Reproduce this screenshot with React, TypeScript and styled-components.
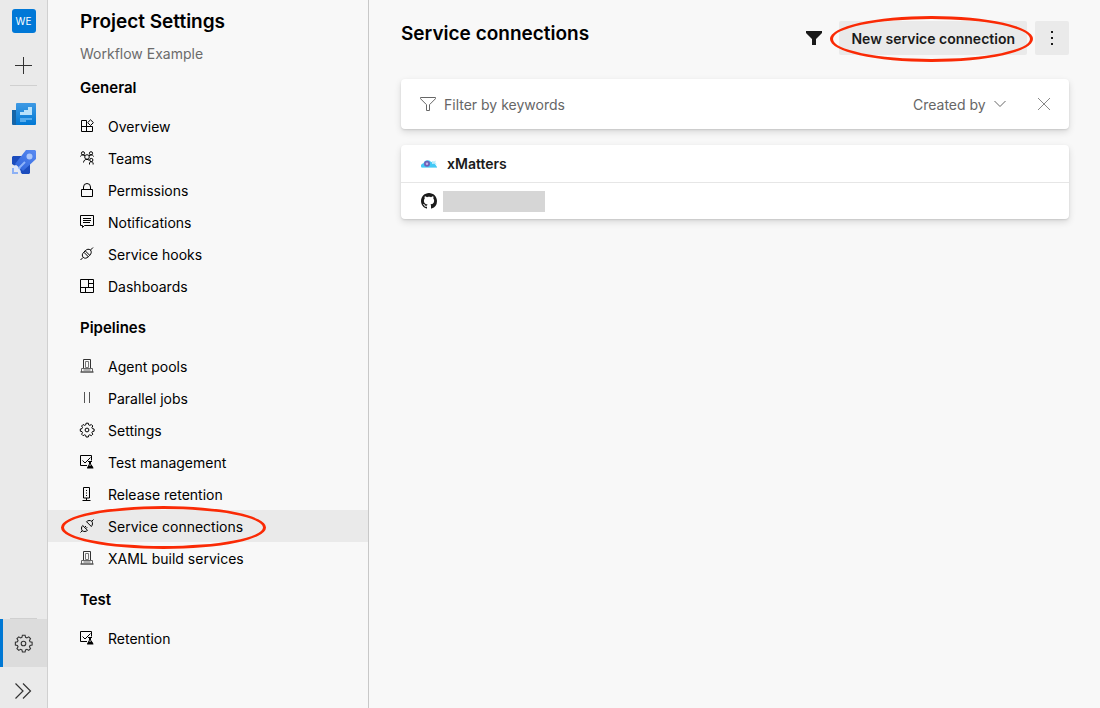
import React from "react";
import styled, { createGlobalStyle } from "styled-components";

const GlobalStyle = createGlobalStyle`
  *, *::before, *::after { box-sizing: border-box; }
  body {
    margin: 0;
    background: #f8f8f8;
    color: #000;
    font-family: Inter, "Liberation Sans", sans-serif;
    font-size: 14px;
    line-height: 20px;
  }
  button, input, select { font: inherit; color: inherit; border: 0; padding: 0; background: none; }
  button, select { cursor: pointer; }
  ul { list-style: none; margin: 0; padding: 0; }
  a { color: inherit; text-decoration: none; }
  svg { display: block; flex: none; }
`;

const Page = styled.div`
  display: flex;
  min-height: 100vh;
`;

const Rail = styled.nav`
  display: flex;
  flex-direction: column;
  flex: none;
  width: 48px;
  height: 100vh;
  background: #eaeaea;
  border-right: 1px solid #d0d0d0;
`;

const RailButton = styled.button<{ $active?: boolean }>`
  display: flex;
  align-items: center;
  justify-content: center;
  flex: none;
  width: 100%;
  height: 48px;
  color: #333;
  background: ${(p) => (p.$active ? "#dcdcdc" : "transparent")};
  box-shadow: ${(p) => (p.$active ? "inset 3px 0 #0078d4" : "none")};
`;

const ProjectButton = styled(RailButton)`
  height: 42px;
`;

const AddButton = styled(RailButton)`
  height: 43px;
  padding-top: 3px;
`;

const ExpandButton = styled(RailButton)`
  height: 41px;
  padding-top: 7px;
`;

const ProjectBadge = styled.span`
  width: 24px;
  height: 24px;
  border-radius: 3px;
  background: #0078d7;
  color: #fff;
  font-size: 10px;
  line-height: 24px;
  text-align: center;
`;

const Divider = styled.div`
  flex: none;
  height: 1px;
  margin: 0 10px;
  background: #d0d0d0;
`;

const RailServices = styled.div`
  flex: 1;
  padding-top: 4px;
`;

const Sidebar = styled.aside`
  flex: none;
  width: 321px;
  padding-top: 8px;
  border-right: 1px solid #c8c8c8;
`;

const SidebarTitle = styled.h1`
  margin: 0 32px;
  font-size: 19px;
  line-height: 28px;
  font-weight: 600;
`;

const SidebarSubtitle = styled.div`
  margin: 8px 32px 0;
  color: #6b6b6b;
`;

const SectionTitle = styled.h2`
  margin: 0;
  padding: 16px 32px 12px;
  font-size: 15px;
  line-height: 20px;
  font-weight: 600;
`;

const FirstSectionTitle = styled(SectionTitle)`
  padding-top: 14px;
`;

const NavLink = styled.a<{ $active?: boolean }>`
  position: relative;
  display: flex;
  align-items: center;
  gap: 14px;
  height: 32px;
  padding: 0 32px;
  background: ${(p) => (p.$active ? "#eaeaea" : "transparent")};
`;

const NavLabel = styled.span`
  padding-top: 2px;
`;

const Ring = styled.span`
  position: absolute;
  border: 3px solid #fa2a05;
  border-radius: 50%;
  pointer-events: none;
`;

const NavRing = styled(Ring)`
  left: 13px;
  top: -4px;
  width: 205px;
  height: 43px;
`;

const ButtonRing = styled(Ring)`
  left: -9px;
  right: -6px;
  top: -5px;
  bottom: -7px;
`;

const Main = styled.main`
  flex: 1;
  min-width: 0;
  padding: 21px 31px 32px 32px;
`;

const Header = styled.header`
  display: flex;
  align-items: flex-start;
  justify-content: space-between;
  margin-bottom: 24px;
`;

const PageTitle = styled.h2`
  margin: 0;
  font-size: 19px;
  line-height: 26px;
  font-weight: 600;
`;

const Actions = styled.div`
  display: flex;
  gap: 8px;
`;

const ActionButton = styled.button<{ $plain?: boolean }>`
  position: relative;
  display: flex;
  align-items: center;
  justify-content: center;
  min-width: 34px;
  height: 34px;
  border-radius: 2px;
  color: #1a1a1a;
  background: ${(p) => (p.$plain ? "transparent" : "#eaeaea")};
`;

const NewButton = styled(ActionButton)`
  padding: 2px 12px 0;
  font-weight: 600;
`;

const Card = styled.section`
  margin-bottom: 16px;
  border-radius: 4px;
  background: #fff;
  box-shadow: 0 3px 7px rgba(0, 0, 0, 0.13), 0 1px 2px rgba(0, 0, 0, 0.11);
`;

const FilterBar = styled(Card)`
  display: flex;
  align-items: center;
  height: 50px;
  padding: 0 18px 0 19px;
  color: #666;
`;

const Keyword = styled.label`
  display: flex;
  align-items: center;
  flex: 1;
  gap: 8px;
`;

const KeywordInput = styled.input`
  flex: 1;
  min-width: 0;
  height: 32px;
  outline: 0;
  &::placeholder { color: #666; opacity: 1; }
`;

const CreatedBy = styled.label`
  display: flex;
  align-items: center;
  gap: 8px;
  margin-right: 31px;
`;

const CreatedBySelect = styled.select`
  appearance: none;
  height: 32px;
  padding-top: 2px;
`;

const Connection = styled.li`
  & + & { border-top: 1px solid #e6e6e6; }
`;

const ConnectionLink = styled.a<{ $gap: number; $height: number }>`
  display: flex;
  align-items: center;
  gap: ${(p) => p.$gap}px;
  height: ${(p) => p.$height}px;
  padding: 0 20px;
  color: #1a1a1a;
  font-weight: 600;
`;

const Redacted = styled.span`
  width: 102px;
  height: 21px;
  background: #d6d6d6;
`;

type IconName =
  | "overview" | "teams" | "lock" | "comment" | "plug" | "dashboard" | "server"
  | "parallel" | "gear" | "test" | "release" | "connect";

const shapes: Record<IconName, React.ReactNode> = {
  overview: (
    <>
      <path d="M6.5 1.5H1.5v11h11v-5M1.5 7.5h11M6.5 1.5v11" />
      <path d="M10.5.8l2.9 2.8-2.9 2.9-2.8-2.9z" />
    </>
  ),
  teams: (
    <>
      <circle cx="3" cy="2.3" r="1.6" />
      <circle cx="11" cy="2.3" r="1.6" />
      <circle cx="7" cy="6" r="2.3" />
      <circle cx="11.3" cy="9" r="1.6" />
      <path d="M.5 5.5C.8 4.3 1.7 3.9 3 3.9l2 .7M13.5 5.5c-.3-1.2-1.2-1.6-2.5-1.6l-2 .7M3.5 11.5C3.8 9.3 5 8.4 7 8.3l2 .8M9.5 13.5v-1.8c.8-1.2 2.8-1.2 3.6 0v1.8" />
    </>
  ),
  lock: <path d="M1.5 6.5h11v7h-11zM3.5 6.5V4a3.5 3.5 0 0 1 7 0v2.5" />,
  comment: <path d="M.5.5h13v10H4.500L2.500 12.500v-2h-2zM3 3.500h8M3 5.500h8M3 7.500h7" />,
  plug: (
    <>
      <path d="M.5 13 3 10.500M10.500 3 13 .5M3.800 5.200l4.500 4.500M5.200 3.800l4.500 4.500" />
      <path d="M3.800 5.200C2 7 1.800 8.800 3.200 10.300c1.500 1.400 3.300 1.200 5.100-.6l1.400-1.400c1.800-1.800 2-3.600.8-5.300-1.700-1.200-3.500-1-5.300.8z" />
    </>
  ),
  dashboard: <path d="M.5.5h13v13H.5zM8.500.5v8M.5 8.500h13M8.500 4.500h5M5.500 8.500v5" />,
  server: (
    <>
      <path d="M3.500 9V.5h7V9" stroke="#333" />
      <path d="M5.500 2.500h3v6h-3z" stroke="#777" />
      <path d="M1.500 12.500v-3h11v3M3.500 11h7" stroke="#666" />
      <path d="M.5 13h13" />
    </>
  ),
  parallel: <path d="M4.500 1v11M9.500 1v11" stroke="#555" />,
  gear: (
    <>
      <path d="M5.900.6h2.200l.4 1.700 1.100.5 1.500-.9 1.500 1.500-.9 1.500.5 1.100 1.700.4v2.200l-1.700.4-.5 1.100.9 1.500-1.500 1.500-1.500-.9-1.100.5-.4 1.700H5.900l-.4-1.700-1.100-.5-1.500.9-1.500-1.500.9-1.500-.5-1.100L.1 8.600V6.400L1.800 6l.5-1.100-.9-1.500 1.500-1.500 1.500.9 1.100-.5z" transform="translate(.2 -.4)" />
      <circle cx="7" cy="7" r="1.900" />
    </>
  ),
  test: (
    <>
      <path d="M7 10.500H.5v-10h11v5M2.500 5.500 5 8l5.500-5.500" />
      <path d="M8 6.500h4M9.500 7v2L7.500 13M10.500 7v2l2.500 4" />
      <path d="M8.500 10.500h3.500l1.500 3H7z" fill="currentColor" stroke="none" />
    </>
  ),
  release: (
    <>
      <path d="M3.500.5h6v10.500h-6zM6.500 11v2.500M2.500 13.500h8" />
      <path d="M6.500 3v1M6.500 5.500v1M6.500 8v1" />
    </>
  ),
  connect: (
    <>
      <path d="M.5 13.500 2.200 11.800M11.800 2.200l1.700-1.700M2.700 6.500l4.800 4.800M6.500 2.700l4.800 4.800M4.600 8.400 6 7M5.800 9.600l1.400-1.400" />
      <path d="M2.700 6.500C1.300 8 1.100 10 2.200 11.800c1.800 1.100 3.800.9 5.300-.5M6.500 2.700C8 1.300 10 1.100 11.800 2.200c1.100 1.800.9 3.800-.5 5.300" />
    </>
  ),
};

const Icon = ({ name, size = 14 }: { name: IconName; size?: number }) => (
  <svg width={size} height={size} viewBox="0 0 14 14" fill="none" stroke="currentColor" strokeWidth={size > 14 ? 0.9 : 1} overflow="visible" aria-hidden="true">
    {shapes[name]}
  </svg>
);

const BoardsLogo = () => (
  <svg width="24" height="22" viewBox="0 0 24 22" aria-hidden="true">
    <defs>
      <linearGradient id="boards" x1="0" y1="0" x2="0" y2="1">
        <stop offset="0" stopColor="#3f9ae4" />
        <stop offset="1" stopColor="#0078d4" />
      </linearGradient>
    </defs>
    <path d="M0 7h5v15H1a1 1 0 0 1-1-1z" fill="#1565a8" />
    <path d="M4 1a1 1 0 0 1 1-1h18a1 1 0 0 1 1 1v20a1 1 0 0 1-1 1H4z" fill="url(#boards)" />
    <path d="M8 12V9h4V7h4V4h4v8z" fill="#b9e2fb" />
    <path d="M8 15h12v2H14v2H8z" fill="#55aced" />
  </svg>
);

const RocketLogo = () => (
  <svg width="24" height="24" viewBox="0 0 24 24" aria-hidden="true">
    <defs>
      <linearGradient id="rocket" x1="1" y1="0" x2="0" y2="1">
        <stop offset="0" stopColor="#5a8bf2" />
        <stop offset="1" stopColor="#2b62da" />
      </linearGradient>
    </defs>
    <path d="M1 6h9l-7 10-3-2V7zM18 13v10l-1 1h-7l-3-4z" fill="#1b4cbd" />
    <path d="M14 0h9l1 1v8L11 21l-8-7z" fill="url(#rocket)" />
    <circle cx="17.500" cy="6.500" r="3" fill="#aac6fb" />
    <path d="M13 12l-7 7" stroke="#8db3fa" strokeWidth="2" />
    <path d="M3 15l6 6-1 2-3-3-2 1-1-3-1-1z" fill="#dce7fd" />
    <path d="M0 18h2v4h4v2H0z" fill="#8db1f5" />
  </svg>
);

const XMattersLogo = () => (
  <svg width="16" height="16" viewBox="0 0 16 16" aria-hidden="true">
    <path d="M1.500 12A2.200 2.200 0 0 1 1 8c.5-.6 1-.7 1.500-.7C3.300 5 5 4 7 4.300c1.500.1 2.500.8 3.200 1.900 1.300-.8 3-.3 3.500 1.300L16 11v1z" fill="#43c9f6" />
    <path d="M11 5l2 .5 2-1-.8 2 1.800 2-3-.8-2 .3z" fill="#b8eafb" />
    <circle cx="6" cy="7.800" r="3" fill="#6d62b8" />
    <circle cx="6" cy="7.800" r="1.200" fill="#c4b2e2" />
    <path d="M1 11h15v1H1z" fill="#8cdef8" />
  </svg>
);

const GitHubLogo = () => (
  <svg width="16" height="16" viewBox="0 0 16 16" fill="#1b1b1b" aria-hidden="true">
    <path d="M8 0C3.580 0 0 3.580 0 8c0 3.540 2.290 6.530 5.470 7.590.4.070.55-.17.55-.38 0-.19-.01-.82-.01-1.490-2.010.37-2.530-.49-2.690-.94-.09-.23-.48-.94-.82-1.130-.28-.15-.68-.52-.01-.53.63-.01 1.080.58 1.230.82.72 1.210 1.870.87 2.330.66.07-.52.28-.87.51-1.070-1.780-.2-3.640-.89-3.640-3.950 0-.87.31-1.590.82-2.150-.08-.2-.36-1.020.08-2.120 0 0 .67-.21 2.200.82.64-.18 1.320-.27 2-.27s1.360.09 2 .27c1.530-1.040 2.200-.82 2.200-.82.44 1.100.16 1.920.08 2.120.51.56.82 1.270.82 2.150 0 3.070-1.870 3.750-3.650 3.950.29.25.54.73.54 1.480 0 1.070-.01 1.930-.01 2.200 0 .21.15.46.55.38A8.010 8.010 0 0 0 16 8c0-4.420-3.580-8-8-8z" />
  </svg>
);

type Item = { label: string; icon: IconName; active?: boolean };

const general: Item[] = [
  { label: "Overview", icon: "overview" },
  { label: "Teams", icon: "teams" },
  { label: "Permissions", icon: "lock" },
  { label: "Notifications", icon: "comment" },
  { label: "Service hooks", icon: "plug" },
  { label: "Dashboards", icon: "dashboard" },
];

const pipelines: Item[] = [
  { label: "Agent pools", icon: "server" },
  { label: "Parallel jobs", icon: "parallel" },
  { label: "Settings", icon: "gear" },
  { label: "Test management", icon: "test" },
  { label: "Release retention", icon: "release" },
  { label: "Service connections", icon: "connect", active: true },
  { label: "XAML build services", icon: "server" },
];

const NavList = ({ items }: { items: Item[] }) => (
  <ul>
    {items.map((item) => (
      <li key={item.label}>
        <NavLink href="#" $active={item.active} aria-current={item.active ? "page" : undefined}>
          <Icon name={item.icon} />
          <NavLabel>{item.label}</NavLabel>
          {item.active && <NavRing />}
        </NavLink>
      </li>
    ))}
  </ul>
);

export default function App() {
  return (
    <Page>
      <GlobalStyle />
      <Rail aria-label="Project">
        <ProjectButton aria-label="Workflow Example"><ProjectBadge>WE</ProjectBadge></ProjectButton>
        <AddButton aria-label="Add">
          <svg width="17" height="17" viewBox="0 0 17 17" stroke="currentColor"><path d="M8.500 0v17M0 8.500h17" /></svg>
        </AddButton>
        <Divider />
        <RailServices>
          <RailButton aria-label="Boards"><BoardsLogo /></RailButton>
          <RailButton aria-label="Pipelines"><RocketLogo /></RailButton>
        </RailServices>
        <Divider />
        <RailButton $active aria-label="Project settings"><Icon name="gear" size={17} /></RailButton>
        <ExpandButton aria-label="Expand">
          <svg width="17" height="16" viewBox="0 0 17 16" fill="none" stroke="currentColor" strokeWidth="1.200"><path d="M.5.500 8 8 .5 15.500M8 .500 15.500 8 8 15.500" /></svg>
        </ExpandButton>
      </Rail>

      <Sidebar>
        <SidebarTitle>Project Settings</SidebarTitle>
        <SidebarSubtitle>Workflow Example</SidebarSubtitle>
        <FirstSectionTitle>General</FirstSectionTitle>
        <NavList items={general} />
        <SectionTitle>Pipelines</SectionTitle>
        <NavList items={pipelines} />
        <SectionTitle>Test</SectionTitle>
        <NavList items={[{ label: "Retention", icon: "test" }]} />
      </Sidebar>

      <Main>
        <Header>
          <PageTitle>Service connections</PageTitle>
          <Actions>
            <ActionButton $plain aria-label="Filter">
              <svg width="16" height="14" viewBox="0 0 16 14" fill="currentColor"><path d="M0 0h16v2l-6 6v6H6V8L0 2z" /></svg>
            </ActionButton>
            <NewButton>New service connection<ButtonRing /></NewButton>
            <ActionButton aria-label="More options">
              <svg width="2" height="14" viewBox="0 0 2 14" fill="currentColor"><path d="M0 0h2v2H0zM0 6h2v2H0zM0 12h2v2H0z" /></svg>
            </ActionButton>
          </Actions>
        </Header>

        <FilterBar>
          <Keyword>
            <svg width="16" height="14" viewBox="0 0 16 14" fill="none" stroke="currentColor" aria-hidden="true"><path d="M.5.500h15v1.200l-6 6v5.800h-3V7.700l-6-6z" /></svg>
            <KeywordInput type="text" placeholder="Filter by keywords" aria-label="Filter by keywords" />
          </Keyword>
          <CreatedBy>
            <CreatedBySelect aria-label="Created by"><option>Created by</option></CreatedBySelect>
            <svg width="12" height="8" viewBox="0 0 12 8" fill="none" stroke="currentColor" aria-hidden="true"><path d="M.5 1 6 6.500 11.500 1" /></svg>
          </CreatedBy>
          <button aria-label="Clear filters">
            <svg width="14" height="14" viewBox="0 0 14 14" stroke="#888"><path d="M1 1l12 12M13 1 1 13" /></svg>
          </button>
        </FilterBar>

        <Card>
          <ul>
            <Connection><ConnectionLink href="#" $gap={10} $height={37}><XMattersLogo />xMatters</ConnectionLink></Connection>
            <Connection><ConnectionLink href="#" $gap={6} $height={36} aria-label="GitHub connection"><GitHubLogo /><Redacted /></ConnectionLink></Connection>
          </ul>
        </Card>
      </Main>
    </Page>
  );
}
